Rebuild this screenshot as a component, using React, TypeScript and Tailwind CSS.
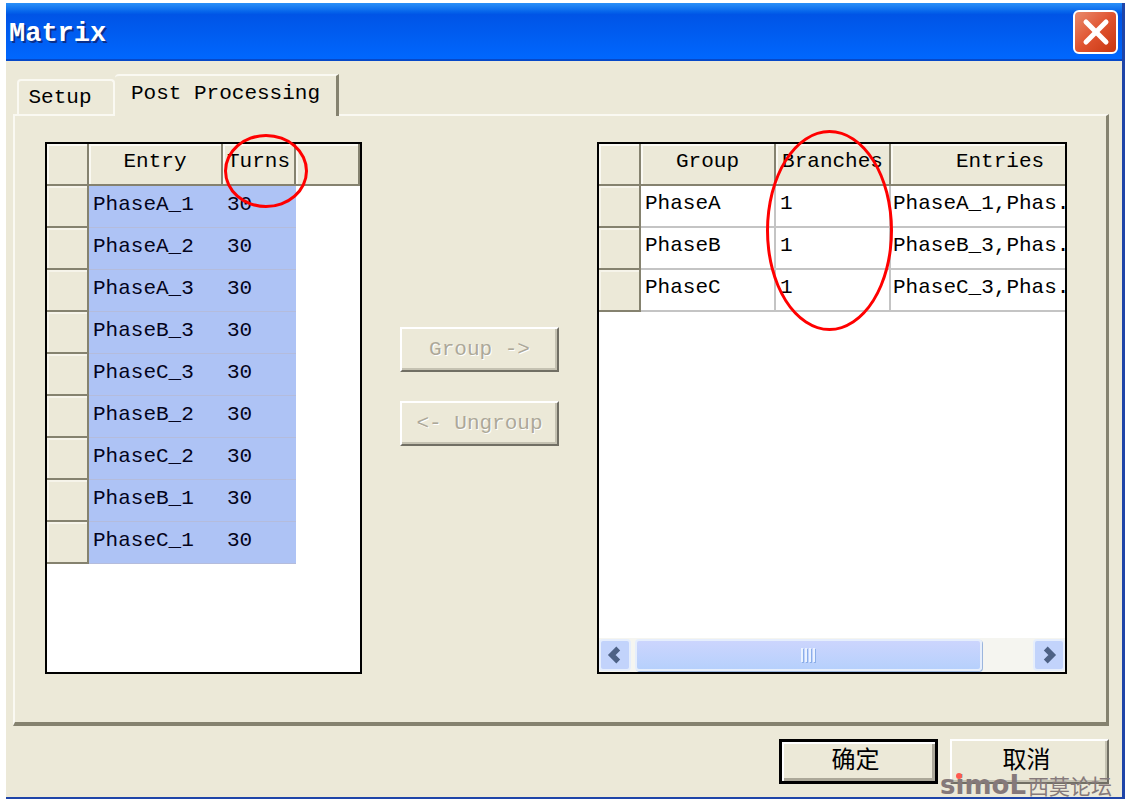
import { useState } from "react";
import { ChevronLeft, ChevronRight, X } from "lucide-react";

const entries = [
  { name: "PhaseA_1", turns: 30 },
  { name: "PhaseA_2", turns: 30 },
  { name: "PhaseA_3", turns: 30 },
  { name: "PhaseB_3", turns: 30 },
  { name: "PhaseC_3", turns: 30 },
  { name: "PhaseB_2", turns: 30 },
  { name: "PhaseC_2", turns: 30 },
  { name: "PhaseB_1", turns: 30 },
  { name: "PhaseC_1", turns: 30 },
];

const groups = [
  { name: "PhaseA", branches: 1, entries: "PhaseA_1,Phas." },
  { name: "PhaseB", branches: 1, entries: "PhaseB_3,Phas." },
  { name: "PhaseC", branches: 1, entries: "PhaseC_3,Phas." },
];

const headCell =
  "h-[42px] border-r-2 border-b-2 border-[#85826f] bg-[#ece9d8] p-0 pb-1 text-center font-normal shadow-[inset_2px_2px_0_#faf9f2]";
const rowHead =
  "h-[42px] border-r-2 border-b-2 border-[#85826f] bg-[#ece9d8] p-0 shadow-[inset_2px_2px_0_#f6f4ea]";
const raised =
  "border-2 border-t-white border-l-white border-r-[#716f64] border-b-[#716f64] shadow-[inset_-2px_-2px_0_#c5c2b2]";

function TitleBar() {
  return (
    <header className="flex h-[58px] items-center justify-between bg-linear-to-b from-[#2a90f8] via-[#0054e6] via-20% to-[#0068ff] pr-1 pl-[3px] shadow-[inset_0_-2px_0_#0648c8]">
      <h1 className="pt-1 text-[27px] leading-8 font-bold text-white [text-shadow:2px_2px_0_#0a2f8a]">
        Matrix
      </h1>
      <button
        aria-label="Close"
        className="flex h-11 w-[45px] items-center justify-center rounded-md border-2 border-white bg-linear-to-br from-[#e88a6c] via-[#e0532f] to-[#c8350f] text-white"
      >
        <X className="size-10 shrink-0" strokeWidth={3} />
      </button>
    </header>
  );
}

function Tabs({ active, onSelect }: { active: string; onSelect: (tab: string) => void }) {
  return (
    <div role="tablist" className="relative z-10 -mb-0.5 flex items-end pl-1">
      <button
        role="tab"
        aria-selected={active === "setup"}
        onClick={() => onSelect("setup")}
        className="mb-0.5 h-[35px] w-[98px] rounded-t border-2 border-b-0 border-[#faf9f2] pr-3"
      >
        Setup
      </button>
      <button
        role="tab"
        aria-selected={active === "post"}
        onClick={() => onSelect("post")}
        className="h-[42px] w-[224px] rounded-tl border-t-2 border-r-3 border-t-[#faf9f2] border-r-[#85826f] bg-[#ece9d8] pb-1"
      >
        Post Processing
      </button>
    </div>
  );
}

function EntryGrid() {
  const cell = "border-b border-[#b4bcdc] bg-[#aec3f5] p-0 pb-1 pl-1 text-[#04041c]";
  return (
    <div className="relative flex min-w-0 flex-[317] flex-col">
      <div className="flex-1 overflow-hidden border-2 border-black bg-white">
        <table className="w-full table-fixed border-separate border-spacing-0">
          <thead>
            <tr>
              <th aria-label="Row" className={`${headCell} w-[42px]`} />
              <th className={`${headCell} w-[134px]`}>Entry</th>
              <th className={`${headCell} w-[73px]`}>Turns</th>
              <th aria-label="Blank" className={`${headCell} border-r-0`} />
            </tr>
          </thead>
          <tbody>
            {entries.map((entry) => (
              <tr key={entry.name}>
                <th aria-label={entry.name} className={rowHead} />
                <td className={cell}>{entry.name}</td>
                <td className={cell}>{entry.turns}</td>
              </tr>
            ))}
          </tbody>
        </table>
      </div>
      <span className="pointer-events-none absolute -top-2 left-[179px] h-[74px] w-[84px] rounded-[50%] border-3 border-[#ff0000]" />
    </div>
  );
}

function ScrollBar() {
  return (
    <div className="flex h-[34px] items-center justify-between bg-[#f5f5f0] py-px">
      <button
        aria-label="Scroll left"
        className="flex h-full w-8 items-center justify-center rounded border-2 border-[#e6eefc] bg-[#c2d3fb] text-[#4d6185]"
      >
        <ChevronLeft size={26} strokeWidth={5} strokeLinecap="butt" strokeLinejoin="miter" />
      </button>
      <div className="mx-1 flex-1">
        <div className="flex h-8 w-[88%] items-center justify-center gap-0.5 rounded border-2 border-[#e6eefc] bg-linear-to-b from-[#ccd5fd] to-[#b6d0fc] shadow-[1px_1px_0_#9bb5dd]">
          <span className="h-3.5 w-0.5 bg-[#eaf2ff] shadow-[1px_1px_0_#8caee8]" />
          <span className="h-3.5 w-0.5 bg-[#eaf2ff] shadow-[1px_1px_0_#8caee8]" />
          <span className="h-3.5 w-0.5 bg-[#eaf2ff] shadow-[1px_1px_0_#8caee8]" />
          <span className="h-3.5 w-0.5 bg-[#eaf2ff] shadow-[1px_1px_0_#8caee8]" />
        </div>
      </div>
      <button
        aria-label="Scroll right"
        className="flex h-full w-8 items-center justify-center rounded border-2 border-[#e6eefc] bg-[#c2d3fb] text-[#4d6185]"
      >
        <ChevronRight size={26} strokeWidth={5} strokeLinecap="butt" strokeLinejoin="miter" />
      </button>
    </div>
  );
}

function GroupGrid() {
  const cell = "border-r-2 border-b-2 border-[#c4c4c4] p-0 pb-1";
  return (
    <div className="relative flex min-w-0 flex-[470] flex-col">
      <div className="flex flex-1 flex-col justify-between overflow-hidden border-2 border-black bg-white">
        <table className="w-[512px] table-fixed border-separate border-spacing-0">
          <thead>
            <tr>
              <th aria-label="Row" className={`${headCell} w-[42px]`} />
              <th className={`${headCell} w-[135px]`}>Group</th>
              <th className={`${headCell} w-[115px]`}>Branches</th>
              <th className={headCell}>Entries</th>
            </tr>
          </thead>
          <tbody>
            {groups.map((group) => (
              <tr key={group.name}>
                <th aria-label={group.name} className={rowHead} />
                <td className={`${cell} pl-1`}>{group.name}</td>
                <td className={`${cell} pl-1`}>{group.branches}</td>
                <td className={`${cell} pl-0.5`}>{group.entries}</td>
              </tr>
            ))}
          </tbody>
        </table>
        <ScrollBar />
      </div>
      <span className="pointer-events-none absolute -top-3 left-[169px] h-[201px] w-[127px] rounded-[50%] border-3 border-[#ff0000]" />
    </div>
  );
}

function ForumMark() {
  return (
    <div className="pointer-events-none absolute right-2.5 bottom-0 flex items-center gap-0.5 leading-6 text-[#85797a]">
      <span className="relative font-['DejaVu_Sans',sans-serif] text-[26px]">
        <b>simoL</b>
        <i className="absolute top-0 left-4 size-1.5 rounded-full bg-[#ff5a50]" />
      </span>
      <span className="font-['Noto_Sans_CJK_SC',sans-serif] text-[21px]">西莫论坛</span>
    </div>
  );
}

export default function App() {
  const [tab, setTab] = useState("post");

  return (
    <div className="flex min-h-screen flex-col bg-white pt-[3px] pr-[3px] pb-0.5 pl-1.5 font-['Liberation_Mono','Noto_Sans_CJK_SC',monospace] text-[21px] leading-7 text-black">
      <main className="flex flex-1 flex-col border-r-3 border-b-2 border-[#1f45a8] bg-[#ece9d8]">
        <TitleBar />

        <section className="flex flex-1 flex-col pt-[13px] pr-[13px] pl-[7px]">
          <Tabs active={tab} onSelect={setTab} />
          <div
            role="tabpanel"
            className="flex flex-1 flex-col border-t-2 border-r-3 border-b-4 border-l-2 border-t-[#faf9f2] border-r-[#85826f] border-b-[#85826f] border-l-[#faf9f2] pt-[26px] pr-[39px] pb-12 pl-[30px]"
          >
            <div className="flex flex-1 items-stretch gap-[38px]">
              <EntryGrid />
              <div className="flex w-[159px] shrink-0 flex-col gap-[29px] pt-[185px]">
                <button
                  disabled
                  className={`h-[45px] text-[#aca899] [text-shadow:1px_1px_0_#fff] ${raised}`}
                >
                  Group -&gt;
                </button>
                <button
                  disabled
                  className={`h-[45px] text-[#aca899] [text-shadow:1px_1px_0_#fff] ${raised}`}
                >
                  &lt;- Ungroup
                </button>
              </div>
              <GroupGrid />
            </div>
          </div>
        </section>

        <footer className="relative flex justify-end gap-3 pt-[13px] pr-[13px] pb-[13px] text-[24px]">
          <button className="h-[45px] w-[159px] border-3 border-black pr-1.5 shadow-[inset_2px_2px_0_#fff,inset_-3px_-3px_0_#aca899]">
            确定
          </button>
          <button className={`h-[45px] w-[159px] pr-1.5 ${raised}`}>取消</button>
          <ForumMark />
        </footer>
      </main>
    </div>
  );
}
